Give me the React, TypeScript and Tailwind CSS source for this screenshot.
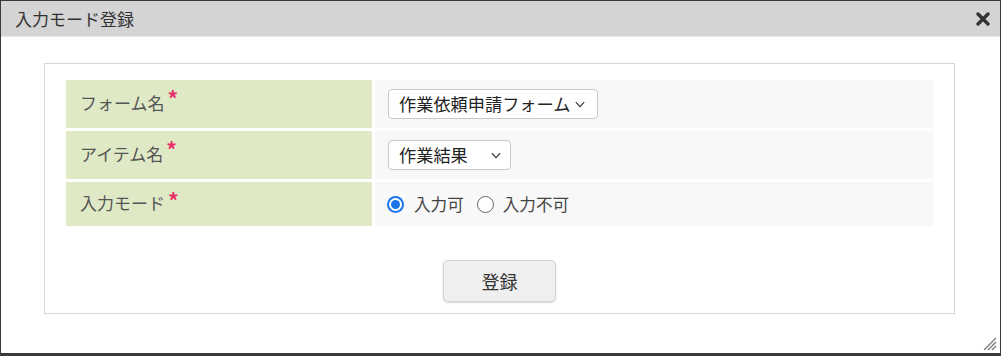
import React from "react";

const jp = { fontFamily: '"Noto Sans CJK JP", "Noto Sans", sans-serif' };

function Chevron() {
  return (
    <svg width="10" height="7" viewBox="0 0 10 7" className="shrink-0">
      <path d="M0.8 1.2 L5 5.6 L9.2 1.2" fill="none" stroke="#333" strokeWidth="1.2" />
    </svg>
  );
}

function Select({ label, width, gap }: { label: string; width: string; gap: string }) {
  return (
    <div
      className={`flex items-center h-[30px] ${width} border border-[#c8c8c8] rounded-[4px] bg-white pl-[10px] pr-[9px] text-[17.2px] text-[#222]`}
    >
      <span className="whitespace-nowrap leading-none">{label}</span>
      <span className={gap}></span>
      <Chevron />
    </div>
  );
}

function Label({ text }: { text: string }) {
  return (
    <div className="bg-[#dfe9c6] flex items-center pl-[14px] pb-[3px] text-[17px] text-[#555]">
      <span className="whitespace-nowrap">{text}</span>
      <span className="text-[#e6306a] font-bold text-[21px] leading-none self-start mt-[8px] ml-[3px]">*</span>
    </div>
  );
}

export default function App() {
  return (
    <div
      style={jp}
      className="w-[1001px] h-[356px] border border-[#3a3a3a] border-b-[3px] bg-white flex flex-col relative overflow-hidden"
    >
      <div className="h-[36px] bg-[#d4d4d4] flex items-center justify-between pl-[14px] pr-[10px] border-b border-[#e6e6e6]">
        <span className="text-[17px] text-[#333]">入力モード登録</span>
        <svg width="14" height="14" viewBox="0 0 14 14">
          <path d="M2 2 L12 12 M12 2 L2 12" stroke="#333" strokeWidth="3.4" strokeLinecap="round" />
        </svg>
      </div>
      <div className="pt-[26px] pl-[43px]">
        <div className="w-[911px] h-[251px] border border-[#d6d6d6] flex flex-col px-[21px] pt-[16px]">
          <div className="grid grid-cols-[306px_1fr] grid-rows-[48px_48px_44px] gap-[3px]">
            <Label text="フォーム名" />
            <div className="bg-[#f8f8f8] flex items-center pl-[13px]">
              <Select label="作業依頼申請フォーム" width="w-[210px]" gap="w-[5px]" />
            </div>
            <Label text="アイテム名" />
            <div className="bg-[#f8f8f8] flex items-center pl-[13px]">
              <Select label="作業結果" width="w-[123px]" gap="flex-1" />
            </div>
            <Label text="入力モード" />
            <div className="bg-[#f8f8f8] flex items-center pl-[12px] text-[16.6px] text-[#444]">
              <span className="w-[17px] h-[17px] rounded-full bg-[#1a73e8] flex items-center justify-center">
                <span className="w-[13px] h-[13px] rounded-full bg-white flex items-center justify-center">
                  <span className="w-[9px] h-[9px] rounded-full bg-[#1a73e8]"></span>
                </span>
              </span>
              <span className="ml-[10px]">入力可</span>
              <span className="ml-[13px] w-[17px] h-[17px] rounded-full border-[1.5px] border-[#666] bg-white"></span>
              <span className="ml-[9px]">入力不可</span>
            </div>
          </div>
          <div className="flex justify-center mt-[34px]">
            <button className="w-[113px] h-[42px] bg-[#efefef] border border-[#d2d2d2] rounded-[5px] shadow-[0_1px_2px_rgba(0,0,0,0.15)] text-[18px] text-[#333]">
              登録
            </button>
          </div>
        </div>
      </div>
      <svg width="14" height="14" viewBox="0 0 14 14" className="absolute right-[3px] bottom-[2px]">
        <path d="M1 13 L13 1 M5 13 L13 5 M9 13 L13 9" stroke="#777" strokeWidth="1.2" />
      </svg>
    </div>
  );
}
